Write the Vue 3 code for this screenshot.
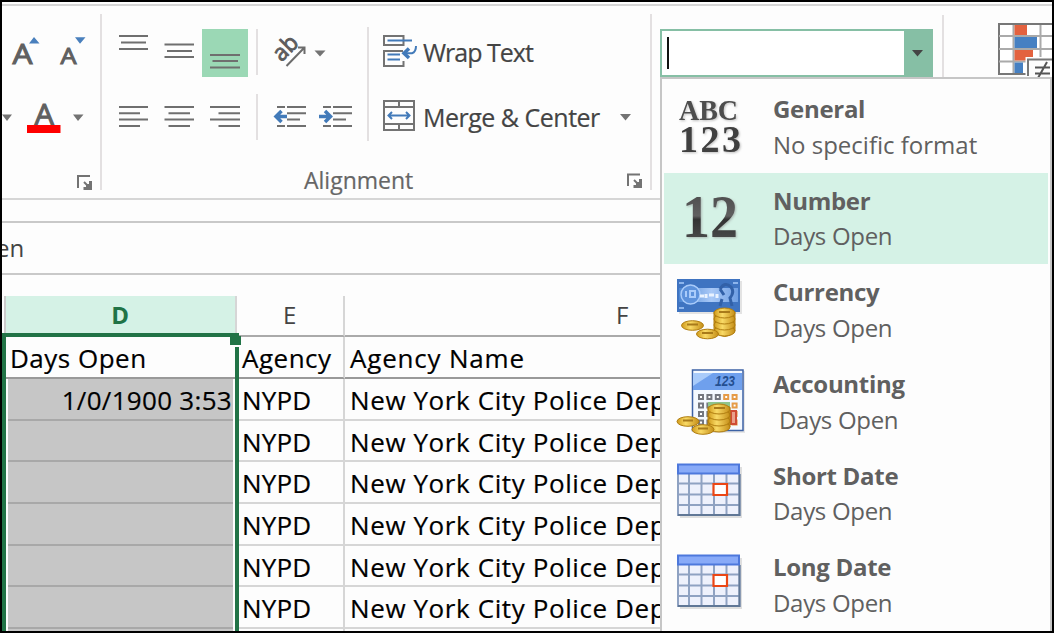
<script setup>
const rows = [
  { d: '1/0/1900 3:53' }, { d: '' }, { d: '' }, { d: '' }, { d: '' }, { d: '' },
]
const formats = [
  { icon: 'general', title: 'General', sample: 'No specific format' },
  { icon: 'number', title: 'Number', sample: 'Days Open', active: true },
  { icon: 'currency', title: 'Currency', sample: 'Days Open' },
  { icon: 'accounting', title: 'Accounting', sample: 'Days Open', indent: true },
  { icon: 'date', title: 'Short Date', sample: 'Days Open' },
  { icon: 'date', title: 'Long Date', sample: 'Days Open' },
]
const vertical = [
  'M9 7H38M11 13.5H36M9 20H38',
  'M8.500 15.500H38M11 22H36M8.500 28H38',
  'M8 26H38M10.500 32H36M8 38.500H38',
]
const horizontal = [
  'M9 13H38M9 19.300H30M9 25.500H38M9 32H30',
  'M8.500 13H38M12.500 19.300H34M8.500 25.500H38M12.500 32H34',
  'M8 13H38M16.500 19.300H38M8 25.500H38M16.500 32H38',
]
const keys = [0, 1, 2, 3, 4]
</script>

<template>
  <div class="window">
    <div class="ribbon">
      <section class="group font-group">
        <svg class="font-tools" width="98" height="192" viewBox="2 6 98 192">
          <g class="glyph">
            <text x="12.500" y="64" font-size="28" textLength="20" lengthAdjust="spacingAndGlyphs">A</text>
            <text x="60.500" y="64" font-size="22" textLength="16" lengthAdjust="spacingAndGlyphs">A</text>
            <text x="34.500" y="125" font-size="29" textLength="19.500" lengthAdjust="spacingAndGlyphs">A</text>
          </g>
          <path d="M29 43.500L34 37L39.500 43.500zM75 37.300H85.500L80 43.800z" fill="#4a80bd" />
          <path d="M27 125H60.500V133H27z" fill="#f00" />
          <path d="M2 114.500H12L7 121zM73 114.500H83.500L78 121z" fill="#737373" />
          <path d="M78 188V176H90" fill="none" stroke="#737373" stroke-width="2" />
          <path d="M84 182L88 186" stroke="#737373" stroke-width="2" />
          <path d="M92 181V190H83.500V187H86V184H89V181z" fill="#737373" />
        </svg>
      </section>

      <section class="group align-group">
        <div class="controls">
          <div class="tool-grid">
            <div class="tool-row">
              <span v-for="(d, i) in vertical" :key="i" class="tool" :class="{ on: i === 2 }">
                <svg width="46" height="48"><path :d="d" class="line" /></svg>
              </span>
              <i class="divider" />
              <svg class="orient" width="68" height="48" viewBox="264 29 68 48">
                <text transform="translate(281.500 62.500) rotate(-45)" font-size="23" textLength="26" lengthAdjust="spacingAndGlyphs" class="ab">ab</text>
                <path d="M286.500 66L304 48M298 47.500H304.500V54" fill="none" stroke="#6c6c6c" stroke-width="2" />
                <path d="M314.500 50.500H325.500L320 56.500z" fill="#737373" />
              </svg>
            </div>
            <div class="tool-row second">
              <span v-for="(d, i) in horizontal" :key="i" class="tool">
                <svg width="46" height="46"><path :d="d" class="line" /></svg>
              </span>
              <i class="divider" />
              <svg class="orient" width="98" height="46" viewBox="264 94 98 46">
                <path class="line" d="M277 107H285M287 107H306M287 113.300H306M287 119.500H300M277 126H285M287 126H306M323 107H331M333 107H352M333 113.300H352M333 119.500H346M323 126H331M333 126H352" />
                <path d="M287 116.500H276M281.500 111L276 116.500L281.500 122" class="blue-thick" />
                <path d="M319 116.500H330M325 111L330.500 116.500L325 122" class="blue-thick" />
              </svg>
            </div>
          </div>
          <i class="divider tall" />
          <div class="commands">
            <div class="command">
              <svg width="35" height="34" viewBox="383 34 35 34">
                <path d="M384 36H403.500V45H384zM403 51H384V66H403.500V61" class="box" />
                <path d="M387.500 40.500H412M387.500 54.500H400M387.500 59.500H400M404 53.300H412Q416 52 416 46" class="blue" />
                <path d="M409 48.500L404 53.300L409 58" class="blue-thick" />
              </svg>
              <span class="wrap">Wrap Text</span>
            </div>
            <div class="command">
              <svg width="35" height="34" viewBox="383 99 35 34">
                <path d="M384 101H414V130H384zM384 107H414M384 124H414M399 101V107M399 124V130" class="box" />
                <path d="M389 115.500H409M392 112L388.500 115.500L392 119M406 112L409.500 115.500L406 119" class="blue" />
              </svg>
              <span class="merge">Merge &amp; Center</span>
              <svg class="arrow" width="11" height="7"><path d="M0 0H11L5.500 6.500z" fill="#737373" /></svg>
            </div>
          </div>
        </div>
        <footer>
          <span>Alignment</span>
          <svg width="16" height="16">
            <path d="M1 13V1.500H13" fill="none" stroke="#737373" stroke-width="2" />
            <path d="M7 7L11 11" stroke="#737373" stroke-width="2" />
            <path d="M15 6V15H6.500V12H9V9H12V6z" fill="#737373" />
          </svg>
        </footer>
      </section>

      <section class="group number-group">
        <div class="combo">
          <i class="caret" />
          <span class="drop"><svg width="11" height="7"><path d="M0 0H11L5.500 6.500z" fill="#444" /></svg></span>
        </div>
      </section>

      <section class="group style-group">
        <svg width="54" height="54" viewBox="998 22 54 54">
          <path d="M999 24H1054V74H999z" fill="#fff" stroke="#777" stroke-width="2" />
          <path d="M999 36H1054M999 49H1054M999 61.500H1054M1013.500 25V73M1040.500 25V73" fill="none" stroke="#aaa" stroke-width="2" />
          <path d="M1014.500 25H1027V35H1014.500zM1014.500 50H1033V60.500H1014.500z" fill="#e3623f" />
          <path d="M1014.500 37H1037V48H1014.500zM1014.500 62.500H1023V73H1014.500z" fill="#4680c2" />
          <path d="M1025.500 76V57H1054V76z" fill="#fdfdfd" />
          <path d="M1028 76V59.500H1054" fill="none" stroke="#777" stroke-width="2" />
          <path d="M1035 67.500H1050M1035 73.500H1050M1047 62L1038 78" stroke="#555" stroke-width="2" />
        </svg>
      </section>
    </div>

    <div class="formula"><span>en</span></div>

    <div class="sheet">
      <div class="row head">
        <div class="c-d">D</div>
        <div class="c-e">E</div>
        <div class="c-f">F</div>
      </div>
      <div class="row titles">
        <div class="c-d">Days Open</div>
        <div class="c-e">Agency</div>
        <div class="c-f">Agency Name</div>
      </div>
      <div v-for="(row, i) in rows" :key="i" class="row data">
        <div class="c-d">{{ row.d }}</div>
        <div class="c-e">NYPD</div>
        <div class="c-f">New York City Police Department</div>
      </div>
      <div class="row data">
        <div class="c-d" /><div class="c-e" /><div class="c-f" />
      </div>
      <div class="selection"><i /></div>
    </div>

    <div class="menu">
      <div v-for="(f, n) in formats" :key="n" class="item" :class="{ active: f.active }">
        <svg v-if="f.icon === 'general'" class="icon serif" width="74" height="80">
          <text x="8" y="39" font-size="30" textLength="59" lengthAdjust="spacingAndGlyphs" fill="#4d4d4d">ABC</text>
          <text x="8" y="70.500" font-size="38" textLength="62" fill="#404040">123</text>
        </svg>
        <svg v-else-if="f.icon === 'number'" class="icon serif" width="74" height="80">
          <defs>
            <linearGradient id="ink" x1="0" y1="0" x2="0" y2="1">
              <stop offset="0" stop-color="#444" /><stop offset=".5" stop-color="#606060" />
              <stop offset=".55" stop-color="#333" /><stop offset="1" stop-color="#555" />
            </linearGradient>
          </defs>
          <text x="11" y="63.500" font-size="61" textLength="56" lengthAdjust="spacingAndGlyphs" fill="url(#ink)">12</text>
        </svg>
        <svg v-else-if="f.icon === 'currency'" class="icon" width="74" height="80">
          <defs>
            <linearGradient id="gold" x1="0" y1="0" x2="1" y2="0">
              <stop offset="0" stop-color="#d09a1a" /><stop offset=".4" stop-color="#f9da66" />
              <stop offset="1" stop-color="#c58e18" />
            </linearGradient>
            <linearGradient id="bill" x1="0" y1="0" x2="1" y2="0">
              <stop offset="0" stop-color="#4c86d2" /><stop offset=".55" stop-color="#a9c9f7" />
              <stop offset="1" stop-color="#6f9fe3" />
            </linearGradient>
          </defs>
          <path d="M8 17H71V50H8z" fill="#c9c9c9" opacity=".5" />
          <path d="M6 15H69V48H6z" fill="#3f74c1" />
          <path d="M8 24H67V38H8z" fill="url(#bill)" />
          <path d="M8 19H13M62 19H67M8 44H13" stroke="#8db5ec" stroke-width="2" />
          <circle cx="19.500" cy="30.500" r="9.500" fill="#5c91db" stroke="#a9cbfa" stroke-width="1.500" />
          <path d="M15 27V33M19 27H24V33H19z" fill="none" stroke="#a9cbfa" stroke-width="2" />
          <path d="M29 32H33M35 30V34M38 31H43M46 30V34" stroke="#eaf3ff" stroke-width="3" />
          <path d="M49 25Q54 17 60 23Q64 28 59 34L61 42M51 35L49 42M49 25L53 31" fill="none" stroke="#3261a8" stroke-width="3" />
          <g fill="url(#gold)" stroke="#b07d10">
            <path d="M43 48V67Q54 78 64 67V48z" />
            <ellipse cx="53.500" cy="67" rx="10.500" ry="5" /><ellipse cx="53.500" cy="61" rx="10.500" ry="5" />
            <ellipse cx="53.500" cy="55" rx="10.500" ry="5" /><ellipse cx="53.500" cy="49" rx="10.500" ry="5" />
            <ellipse cx="21.500" cy="61.500" rx="11" ry="4.800" /><ellipse cx="36.500" cy="70" rx="11" ry="4.800" />
          </g>
          <path d="M48 48H59M16 60.500H27M31 69H42" stroke="#a87a1a" stroke-width="2" />
        </svg>
        <svg v-else-if="f.icon === 'accounting'" class="icon" width="74" height="80">
          <path d="M23 15H74V77H23z" fill="#bbb" opacity=".35" />
          <path d="M21.500 14H72V74.500H21.500z" fill="#f4f9ff" stroke="#3c62a5" stroke-width="1.500" />
          <path d="M22 17H71V34H22z" fill="#6fa0ed" /><path d="M22 17H42L22 30z" fill="#a9cbfa" />
          <text x="44" y="29.500" font-size="14" textLength="20" lengthAdjust="spacingAndGlyphs" class="digits">123</text>
          <g fill="#fff" stroke-width="2">
            <template v-for="c in keys" :key="c">
              <path v-for="r in [0, 1, 2, 3]" :key="r" :transform="`translate(${28 + c * 8.400} ${39 + r * 8.500})`" d="M0 0H4V4H0z" :stroke="c > 2 ? '#e59b48' : '#74777f'" />
            </template>
          </g>
          <path d="M60 55H65V68H60z" fill="#e9a08b" stroke="#cf4c34" stroke-width="2" />
          <path d="M37 46H59V53H37z" fill="#8fc48b" />
          <g fill="url(#gold)" stroke="#b07d10">
            <path d="M37 51V71Q48 80 59 71V51z" />
            <ellipse cx="48" cy="71" rx="11" ry="5" /><ellipse cx="48" cy="65" rx="11" ry="5" />
            <ellipse cx="48" cy="59" rx="11" ry="5" /><ellipse cx="48" cy="53" rx="11" ry="5" />
            <ellipse cx="17" cy="65.500" rx="11" ry="4.800" /><ellipse cx="32" cy="73.500" rx="11" ry="4.800" />
          </g>
          <path d="M43 52H54M12 64.500H22M27 72.500H37" stroke="#a87a1a" stroke-width="2" />
        </svg>
        <svg v-else class="icon" width="74" height="80">
          <path d="M9 19H71V70H9z" fill="#bbb" opacity=".45" />
          <path d="M6 16H69V67.500H6z" fill="#eef1fc" />
          <path d="M7 26V67H68.500V26M18 26V67M30.500 26V67M43 26V67M55.500 26V67M7 35.500H68M7 46.500H68M7 57H68" fill="none" stroke="#8fa2c2" stroke-width="2" />
          <path d="M7 67H68.500V26" fill="none" stroke="#607796" stroke-width="2" />
          <path d="M7 16.500H68V25.500H7z" fill="#88aaf8" stroke="#4d78dc" stroke-width="2" />
          <path d="M42.500 36H56V47H42.500z" fill="#fff" stroke="#eb4615" stroke-width="2.200" />
        </svg>
        <div class="copy">
          <b>{{ f.title }}</b>
          <span :class="{ indent: f.indent, wide: n === 0 }">{{ f.sample }}</span>
        </div>
      </div>
    </div>
  </div>
</template>

<style>
body { overflow: hidden; }
</style>

<style scoped>
* { box-sizing: border-box; }
.window {
  position: relative; width: 1054px; height: 633px; overflow: hidden;
  border: 2px solid #000; background: #fdfdfd; color: #444;
  font-family: "Open Sans", "Noto Sans", sans-serif;
}
svg { display: block; flex: none; overflow: visible; }
.ribbon { display: flex; height: 196px; margin-top: 2px; border-top: 2px solid #d6d6d6; border-bottom: 2px solid #d6d6d6; }
.group { position: relative; flex: none; }
.font-group { width: 98px; }
.glyph text { fill: #606060; stroke: #606060; stroke-width: 1; }
.line { fill: none; stroke: #6f6f6f; stroke-width: 2; }
.blue { fill: none; stroke: #427ab9; stroke-width: 2; }
.blue-thick { fill: none; stroke: #427ab9; stroke-width: 3.500; }
.box { fill: none; stroke: #737373; stroke-width: 2; }
.ab { fill: #5c5c5c; stroke: #5c5c5c; stroke-width: .9; }
.align-group { width: 552px; padding: 9px 0 0 0; border: solid #e3e0e1; border-width: 0 2px; border-image: linear-gradient(transparent 9px, #e3e0e1 9px, #e3e0e1 183px, transparent 183px) 1; }
.controls { display: flex; height: 127px; padding-left: 8px; }
.tool-grid { width: 256px; padding-top: 14px; }
.tool-row { display: flex; height: 48px; }
.tool-row.second { height: 46px; margin-top: 17px; }
.tool { width: 46px; }
.tool.on { background: #9bd8b5; }
.divider { flex: none; width: 2px; height: 46px; margin-left: 8px; background: #e3e0e1; }
.divider.tall { height: 114px; margin: 12px 14px 0 1px; }
.orient { margin-left: 6px; }
.commands { padding-top: 19px; }
.command { display: flex; height: 34px; margin-bottom: 31px; align-items: center; font-size: 25px; white-space: nowrap; -webkit-text-stroke: .2px #444; }
.command span { margin-left: 5px; padding-top: 2px; line-height: 34px; }
.wrap { letter-spacing: -1px; }
.merge { letter-spacing: -.5px; }
.arrow { margin-left: 20px; margin-top: 2px; }
footer { display: flex; justify-content: space-between; align-items: center; height: 34px; margin-top: 22px; padding: 0 7px 0 202px; color: #666; font-size: 23px; }
footer span { padding-bottom: 2px; -webkit-text-stroke: .2px #666; }
.number-group { width: 292px; padding: 23px 0 0 8px; }
.combo { display: flex; width: 273px; height: 48px; border: 2px solid #86bfa5; background: #fff; }
.caret { width: 2px; height: 32px; margin: 6px 0 0 5px; background: #111; }
.drop { display: grid; width: 27px; margin-left: auto; place-items: center; background: #86bfa5; }
.style-group { padding: 16px 0 0 54px; }
.style-group::before { content: ""; position: absolute; left: -2px; top: 9px; width: 2px; height: 70px; background: #e3e0e1; }
.formula { height: 54px; margin-top: 21px; border: solid #c9c9c9; border-width: 2px 0; font-size: 24px; line-height: 50px; overflow: hidden; }
.formula span { margin-left: -6px; }
.sheet { position: relative; margin-top: 21px; color: #000; font-size: 26px; letter-spacing: .5px; -webkit-text-stroke: .2px #000; }
.row { display: grid; grid-template-columns: 235px 108px 1fr; height: 41.700px; white-space: nowrap; line-height: 42px; }
.row > div { overflow: hidden; border-right: 2px solid #d6d6d6; border-bottom: 2px solid #d6d6d6; }
.row .c-e { padding-left: 5px; }
.row .c-f { padding-left: 5px; }
.data .c-f { letter-spacing: .6px; }
.titles .c-f { letter-spacing: .8px; }
.head { height: 41px; color: #444; text-align: center; line-height: 38px; font-size: 24px; -webkit-text-stroke: 0; }
.row.head > div { padding: 0; border-bottom-color: #aaa; }
.row.head .c-d { margin-left: 2px; background: #d5f2e6; color: #217346; font-weight: 700; border-left: 2px solid #ccc; }
.row.head .c-f { padding-right: 150px; }
.titles { height: 42px; }
.row.titles > div { border-bottom-color: #999; }
.titles .c-d { padding-left: 8px; }
.data .c-d { margin-left: 6px; width: 225px; background: #c6c6c6; text-align: right; padding-right: 1px; border-right: 0; letter-spacing: .3px; }
.data .c-e { letter-spacing: .2px; }
.row.data .c-d { border-bottom-color: #a8a8a8; }
.selection { position: absolute; left: 0; top: 37px; width: 237px; height: 400px; border: 4px solid #217346; border-bottom: 0; }
.selection i { position: absolute; right: -6px; top: -1px; width: 11px; height: 9px; background: #217346; border-bottom: 2px solid #fdfdfd; box-sizing: content-box; }
.menu { position: absolute; left: 658px; top: 75px; width: 392px; height: 560px; padding: 2px 2px 0; border: 2px solid #c6c6c6; background: #fdfdfd; }
.item { display: flex; height: 91.700px; padding-left: 7px; }
.item.active { background: #d5f2e6; }
.copy { padding: 10px 0 0 28px; color: #606060; font-size: 24px; white-space: nowrap; }
.copy b, .copy span { display: block; line-height: 35.500px; letter-spacing: -.3px; }
.copy span.wide { letter-spacing: 0; }
.copy .indent { padding-left: 6px; }
.serif { font-family: "Liberation Serif", serif; font-weight: 700; filter: drop-shadow(1.500px 1.500px 1px #8888); }
.digits { font-family: "Liberation Sans", sans-serif; font-style: italic; font-weight: 700; fill: #244f91; }
</style>
